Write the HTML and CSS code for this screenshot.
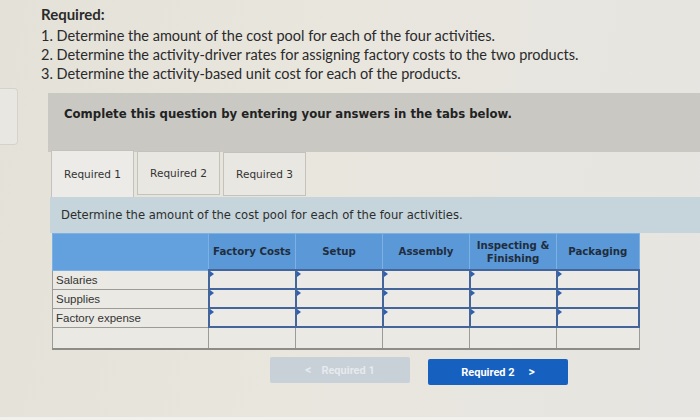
FILE: index.html
```html
<!DOCTYPE html>
<html>
<head>
<meta charset="utf-8">
<link rel="stylesheet" href="styles.css">
</head>
<body>
<div class="page">
  <div class="required">
    <div class="req-title">Required:</div>
    <div class="req-line">1. Determine the amount of the cost pool for each of the four activities.</div>
    <div class="req-line">2. Determine the activity-driver rates for assigning factory costs to the two products.</div>
    <div class="req-line">3. Determine the activity-based unit cost for each of the products.</div>
  </div>
  <div class="stage">
    <div class="side"><div class="side-box"></div></div>
    <div class="main">
      <div class="banner">Complete this question by entering your answers in the tabs below.</div>
      <div class="tabs">
        <div class="tab tab-active">Required 1</div>
        <div class="tab">Required 2</div>
        <div class="tab tab-3">Required 3</div>
      </div>
      <div class="instr">Determine the amount of the cost pool for each of the four activities.</div>
      <table class="grid">
        <thead>
          <tr>
            <th class="c-label"></th>
            <th class="c-num">Factory Costs</th>
            <th class="c-num">Setup</th>
            <th class="c-num">Assembly</th>
            <th class="c-num">Inspecting &amp;<br>Finishing</th>
            <th class="c-last">Packaging</th>
          </tr>
        </thead>
        <tbody>
          <tr>
            <td class="lbl">Salaries</td>
            <td class="inp"></td><td class="inp"></td><td class="inp"></td><td class="inp"></td><td class="inp"></td>
          </tr>
          <tr>
            <td class="lbl">Supplies</td>
            <td class="inp"></td><td class="inp"></td><td class="inp"></td><td class="inp"></td><td class="inp"></td>
          </tr>
          <tr>
            <td class="lbl">Factory expense</td>
            <td class="inp"></td><td class="inp"></td><td class="inp"></td><td class="inp"></td><td class="inp"></td>
          </tr>
          <tr class="total">
            <td class="lbl"></td>
            <td></td><td></td><td></td><td></td><td></td>
          </tr>
        </tbody>
      </table>
      <div class="nav">
        <div class="btn btn-prev"><span class="chev">&lt;</span>Required 1</div>
        <div class="btn btn-next">Required 2<span class="chev chev-r">&gt;</span></div>
      </div>
    </div>
  </div>
</div>
</body>
</html>
```

FILE: styles.css
```css
html, body {
  margin: 0;
  padding: 0;
}
body {
  width: 700px;
  height: 420px;
  overflow: hidden;
  background: linear-gradient(100deg, #e4e1d9 0%, #e9e6de 45%, #e6e5e1 100%);
  color: #2b2b2b;
}
.page {
  height: 420px;
  border-bottom: 3px solid #f2f1ee;
  box-sizing: border-box;
}
.required {
  padding: 5px 0 0 41px;
  font-family: Lato, "Open Sans", sans-serif;
  font-size: 14.5px;
  line-height: 19px;
  color: #2a2a2a;
}
.req-title {
  font-weight: bold;
  font-size: 15px;
  margin-bottom: 2px;
}
.stage {
  display: flex;
  align-items: flex-start;
  margin-top: 5px;
}
.side {
  width: 48px;
  flex: none;
}
.side-box {
  width: 17px;
  height: 55px;
  border: 1px solid #d4d2cc;
  border-left: none;
  border-radius: 0 4px 4px 0;
  background: #e9e7e1;
}
.main {
  flex: 1;
  padding-top: 5px;
}
.banner {
  height: 59px;
  box-sizing: border-box;
  background: #c9c8c3;
  padding: 14px 0 0 16px;
  font-family: "DejaVu Sans", Verdana, sans-serif;
  font-weight: bold;
  font-size: 11.7px;
  color: #222;
}
.tabs {
  display: flex;
  gap: 3px;
  padding-left: 3px;
  margin-top: -2px;
  height: 47px;
  align-items: flex-start;
}
.tab {
  width: 83px;
  height: 44px;
  box-sizing: border-box;
  border: 1px solid #c4c2bd;
  background: #e9e7e2;
  font-family: "DejaVu Sans", Verdana, sans-serif;
  font-size: 10.5px;
  color: #333;
  display: flex;
  align-items: center;
  justify-content: center;
  margin-top: 1px;
}
.tab-active {
  height: 47px;
  margin-top: 0;
  background: #ecebe7;
  border-bottom: none;
}
.tab-3 {
  margin-top: 2px;
}
.instr {
  margin-left: 2px;
  height: 36px;
  box-sizing: border-box;
  background: #c5d5db;
  padding: 11px 0 0 11px;
  font-family: "DejaVu Sans", Verdana, sans-serif;
  font-size: 11.6px;
  color: #2d2d2d;
}
.grid {
  margin-left: 4px;
  border-collapse: collapse;
  table-layout: fixed;
  width: 588px;
  font-family: "DejaVu Sans", Verdana, sans-serif;
}
.grid th {
  background: #5b98d8;
  height: 35px;
  padding: 0;
  font-size: 10.2px;
  font-weight: bold;
  color: #1f2d3d;
  border: 1px solid #7fb0e4;
  line-height: 13px;
  vertical-align: middle;
}
.grid th.c-label {
  width: 155px;
  background: #63a0de;
}
.grid th.c-num {
  width: 86px;
}
.grid td {
  height: 17px;
  padding: 0;
  border: 1px solid #9c9b97;
  background: #ebe9e4;
}
.grid td.lbl {
  font-family: "Liberation Sans", Arial, sans-serif;
  font-size: 11.5px;
  color: #333;
  padding-left: 3px;
}
.grid td.inp {
  border: 2px solid #44659a;
  position: relative;
  background: #eceae6;
}
.grid td.inp::before {
  content: "";
  position: absolute;
  left: 0;
  top: 0;
  border-top: 3px solid transparent;
  border-bottom: 3px solid transparent;
  border-left: 4px solid #2e5fb0;
}
.grid tr.total td {
  height: 20px;
  border-bottom: 2px solid #8d8c88;
}
.nav {
  display: flex;
  gap: 18px;
  padding-left: 222px;
  margin-top: 7px;
  align-items: flex-start;
}
.btn {
  width: 140px;
  height: 26px;
  border-radius: 2px;
  display: flex;
  align-items: center;
  justify-content: center;
  font-family: Roboto, "Liberation Sans", Arial, sans-serif;
  font-weight: bold;
  font-size: 11px;
}
.btn-prev {
  background: #c8d0d8;
  color: #e6eaee;
}
.btn-next {
  background: #1660bf;
  color: #ffffff;
  margin-top: 2px;
}
.chev {
  font-size: 12px;
  margin-right: 10px;
  line-height: 1;
}
.chev-r {
  margin-right: 0;
  margin-left: 14px;
}
```
